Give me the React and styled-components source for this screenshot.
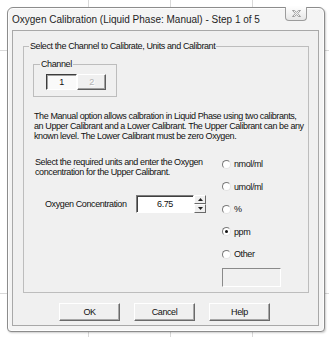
import React from 'react';
import styled, { createGlobalStyle } from 'styled-components';

const GlobalStyle = createGlobalStyle`
  html, body { margin: 0; padding: 0; background: #fff; }
  body { font-family: "Liberation Sans", Arial, sans-serif; color: #111; }
`;

const gridLine = '#d9d9d9';
const tight = '-0.4px';

// spreadsheet behind the dialog
const Sheet = styled.div`
  width: 329px;
  height: 337px;
  box-sizing: border-box;
  padding: 7px 4px 0 7px;
  background:
    linear-gradient(${gridLine}, ${gridLine}) 88px 0 / 1px 100% no-repeat,
    linear-gradient(${gridLine}, ${gridLine}) 170px 0 / 1px 100% no-repeat,
    linear-gradient(${gridLine}, ${gridLine}) 252px 0 / 1px 100% no-repeat,
    linear-gradient(${gridLine}, ${gridLine}) 0 50px / 100% 1px no-repeat,
    linear-gradient(${gridLine}, ${gridLine}) 0 293px / 100% 1px no-repeat,
    #fff;
`;

const Window = styled.div`
  width: 318px;
  height: 325px;
  box-sizing: border-box;
  display: flex;
  flex-direction: column;
  border: 1px solid #8c8c8c;
  border-radius: 6px 6px 4px 4px;
  background: #f4f4f4;
  padding: 0 5px 5px 4px;
  box-shadow: inset 0 0 0 1px #fdfdfd, 1px 1px 2px rgba(0, 0, 0, 0.2);
`;

const TitleBar = styled.div`
  height: 22px;
  display: flex;
  align-items: center;
  justify-content: space-between;
`;

const Title = styled.span`
  font-size: 10px;
  color: #1e1e1e;
  white-space: nowrap;
`;

const CloseButton = styled.div`
  align-self: flex-start;
  margin-top: -1px;
  margin-right: 12px;
  width: 22px;
  height: 14px;
  box-sizing: border-box;
  border: 1px solid #9c9c9c;
  border-top: none;
  border-radius: 0 0 4px 4px;
  background: linear-gradient(#fdfdfd, #e6e6e6);
  display: flex;
  align-items: center;
  justify-content: center;
`;

const Client = styled.div`
  flex: 1;
  display: flex;
  flex-direction: column;
  border: 1px solid #a8a8a8;
  background: #f0f0f0;
  padding: 10px 9px 0 10px;
  letter-spacing: ${tight};
`;

const Group = styled.fieldset`
  margin: 0;
  padding: 0;
  min-width: 0;
  border: 1px solid #bdbdbd;
`;

const Legend = styled.legend`
  font-size: 9px;
  line-height: 11px;
  padding: 0 1px;
  margin-left: ${p => p.$offset}px;
  white-space: nowrap;
`;

const GroupBody = styled.div`
  display: flex;
  flex-direction: column;
  align-items: flex-start;
  padding: 7px 9px 5px 9px;
`;

const ChannelBox = styled.fieldset`
  margin: 0;
  padding: 0;
  min-width: 0;
  width: 84px;
  box-sizing: border-box;
  border: 1px solid #bdbdbd;
`;

const ChannelRow = styled.div`
  display: flex;
  padding: 4px 0 6px 12px;
`;

const ChannelButton = styled.div`
  width: ${p => p.$w}px;
  height: 16px;
  box-sizing: border-box;
  display: flex;
  align-items: center;
  justify-content: center;
  font-size: 9px;
  border: 1px solid;
  ${p => p.$pressed
    ? `border-color: #3c3c3c #ffffff #ffffff #3c3c3c;
       box-shadow: inset 1px 1px 0 #a0a0a0;
       background: #fafafa;
       color: #111;`
    : `border-color: #ffffff #5e5e5e #5e5e5e #ffffff;
       box-shadow: inset -1px -1px 0 #a0a0a0;
       background: #f0f0f0;
       color: #b4b4b4;
       text-shadow: 1px 1px 0 #fff;`}
`;

const Text = styled.p`
  margin: ${p => p.$top}px 0 0;
  padding-left: ${p => p.$indent}px;
  font-size: 9px;
  line-height: 10px;
  white-space: nowrap;
`;

const Lower = styled.div`
  display: flex;
  align-items: flex-start;
  margin-top: 12px;
`;

const LeftCol = styled.div`
  width: 189px;
  display: flex;
  flex-direction: column;
`;

const ValueRow = styled.div`
  display: flex;
  align-items: center;
  margin-top: 18px;
`;

const ValueLabel = styled.span`
  width: 91px;
  padding-left: 12px;
  font-size: 9px;
  white-space: nowrap;
`;

const Input = styled.div`
  width: 58px;
  height: 18px;
  box-sizing: border-box;
  border: 1px solid;
  border-color: #7c7c7c #ffffff #ffffff #7c7c7c;
  box-shadow: inset 1px 1px 0 #404040;
  background: #fff;
  display: flex;
  align-items: center;
  justify-content: center;
  font-size: 9px;
`;

const Spinner = styled.div`
  width: 12px;
  height: 18px;
  display: flex;
  flex-direction: column;
`;

const SpinButton = styled.div`
  flex: 1;
  box-sizing: border-box;
  border: 1px solid;
  border-color: #ffffff #6a6a6a #6a6a6a #ffffff;
  background: #f0f0f0;
  display: flex;
  align-items: center;
  justify-content: center;
`;

const RightCol = styled.div`
  display: flex;
  flex-direction: column;
`;

const RadioRow = styled.label`
  height: 22.5px;
  display: flex;
  align-items: center;
  gap: 3px;
  font-size: 9px;
  white-space: nowrap;
`;

const RadioDot = styled.span`
  width: 9px;
  height: 9px;
  box-sizing: border-box;
  border-radius: 50%;
  border: 1px solid;
  border-color: #7a7a7a #e4e4e4 #e4e4e4 #7a7a7a;
  background: #fff;
  display: flex;
  align-items: center;
  justify-content: center;
  &::after {
    content: '';
    width: 3px;
    height: 3px;
    border-radius: 50%;
    background: ${p => (p.$checked ? '#111' : 'transparent')};
  }
`;

const OtherBox = styled.div`
  margin-top: 2px;
  width: 59px;
  height: 19px;
  box-sizing: border-box;
  border: 1px solid;
  border-color: #8a8a8a #ffffff #ffffff #8a8a8a;
  background: #f0f0f0;
`;

const ButtonRow = styled.div`
  display: flex;
  gap: 14px;
  margin-top: 10px;
  padding-left: 36px;
`;

const Button = styled.div`
  width: 61px;
  height: 18px;
  box-sizing: border-box;
  border: 1px solid;
  border-color: #ffffff #6a6a6a #6a6a6a #ffffff;
  box-shadow: inset -1px -1px 0 #a8a8a8;
  background: #f0f0f0;
  display: flex;
  align-items: center;
  justify-content: center;
  font-size: 9px;
`;

const Arrow = ({ up }) => (
  <svg width="5" height="3" viewBox="0 0 5 3">
    <path d={up ? 'M0 3 L2.5 0 L5 3 Z' : 'M0 0 L2.5 3 L5 0 Z'} fill="#222" />
  </svg>
);

const units = ['nmol/ml', 'umol/ml', '%', 'ppm', 'Other'];

export default function App() {
  return (
    <>
      <GlobalStyle />
      <Sheet>
        <Window>
          <TitleBar>
            <Title>Oxygen Calibration (Liquid Phase: Manual) - Step 1 of 5</Title>
            <CloseButton>
              <svg width="9" height="7" viewBox="0 0 9 7">
                <path
                  d="M0.5 0.5 H2.5 L4.5 2.3 L6.5 0.5 H8.5 L5.7 3.5 L8.5 6.5 H6.5 L4.5 4.7 L2.5 6.5 H0.5 L3.3 3.5 Z"
                  fill="#f2f2f2"
                  stroke="#8a8a8a"
                  strokeWidth="0.8"
                />
              </svg>
            </CloseButton>
          </TitleBar>
          <Client>
            <Group>
              <Legend $offset={5}>Select the Channel to Calibrate, Units and Calibrant</Legend>
              <GroupBody>
                <ChannelBox>
                  <Legend $offset={6}>Channel</Legend>
                  <ChannelRow>
                    <ChannelButton $w={31} $pressed>1</ChannelButton>
                    <ChannelButton $w={29}>2</ChannelButton>
                  </ChannelRow>
                </ChannelBox>
                <Text $top={14} $indent={1}>
                  The Manual option allows calbration in Liquid Phase using two calibrants,<br />
                  an Upper Calibrant and a Lower Calibrant. The Upper Calibrant can be any<br />
                  known level. The Lower Calibrant must be zero Oxygen.
                </Text>
                <Lower>
                  <LeftCol>
                    <Text $top={4} $indent={2}>
                      Select the required units and enter the Oxygen<br />
                      concentration for the Upper Calibrant.
                    </Text>
                    <ValueRow>
                      <ValueLabel>Oxygen Concentration</ValueLabel>
                      <Input>6.75</Input>
                      <Spinner>
                        <SpinButton><Arrow up /></SpinButton>
                        <SpinButton><Arrow /></SpinButton>
                      </Spinner>
                    </ValueRow>
                  </LeftCol>
                  <RightCol>
                    {units.map(u => (
                      <RadioRow key={u}>
                        <RadioDot $checked={u === 'ppm'} />
                        {u}
                      </RadioRow>
                    ))}
                    <OtherBox />
                  </RightCol>
                </Lower>
              </GroupBody>
            </Group>
            <ButtonRow>
              <Button>OK</Button>
              <Button>Cancel</Button>
              <Button>Help</Button>
            </ButtonRow>
          </Client>
        </Window>
      </Sheet>
    </>
  );
}
